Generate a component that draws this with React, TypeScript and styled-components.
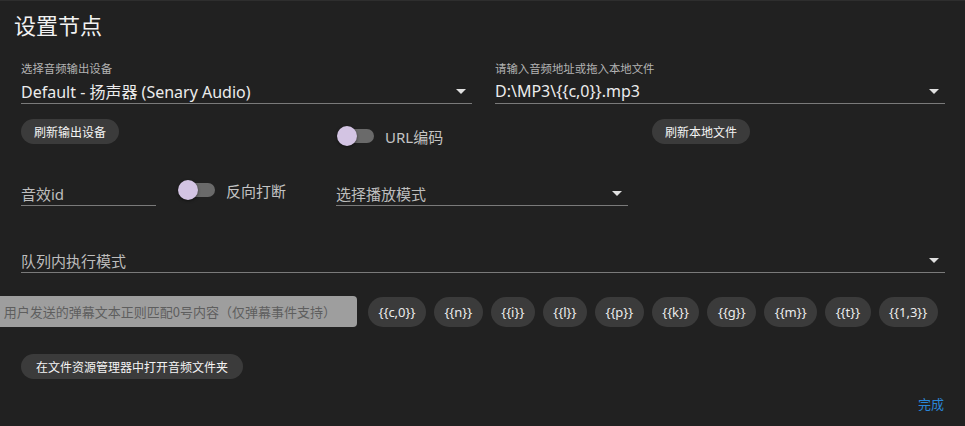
import React from "react";
import styled, { createGlobalStyle } from "styled-components";

const Global = createGlobalStyle`
  html, body { margin: 0; padding: 0; background: #212121; }
  body { font-family: "Noto Sans", "Noto Sans CJK SC", sans-serif; color: #e6e6e6; }
  * { box-sizing: border-box; }
`;

const Root = styled.div`
  width: 965px;
  height: 426px;
  overflow: hidden;
  background: #212121;
  border-top: 1px solid #2e2e2e;
`;

const Title = styled.h1`
  margin: 8px 0 0 14px;
  font-size: 22px;
  line-height: 30px;
  font-weight: 400;
  color: #f2f2f2;
  font-family: "Noto Sans CJK SC", sans-serif;
`;

const Body = styled.div`
  padding: 0 20px 0 21px;
  display: flex;
  flex-direction: column;
`;

const TwoCol = styled.div`
  display: grid;
  grid-template-columns: 451px 450px;
  column-gap: 23px;
  margin-top: 21px;
`;

const Field = styled.div`
  display: flex;
  flex-direction: column;
  border-bottom: 1px solid #7a7a7a;
`;

const Label = styled.div`
  font-size: 11.4px;
  line-height: 16px;
  color: #b3b3b3;
  font-family: "Noto Sans CJK SC", sans-serif;
`;

const ValueRow = styled.div<{ $top?: number; $muted?: boolean }>`
  display: flex;
  align-items: center;
  justify-content: space-between;
  margin-top: ${(p) => p.$top ?? 0}px;
  height: 24px;
  font-size: ${(p) => (p.$muted ? 15 : 16)}px;
  color: ${(p) => (p.$muted ? "#bdbdbd" : "#ececec")};
  white-space: nowrap;
`;

const Arrow = styled.span`
  width: 0;
  height: 0;
  border-left: 5px solid transparent;
  border-right: 5px solid transparent;
  border-top: 5px solid #e0e0e0;
  margin-right: 6px;
`;

const ActionRow = styled.div`
  display: grid;
  grid-template-columns: 316px 315px 1fr;
  align-items: start;
  margin-top: 15px;
`;

const Pill = styled.button`
  justify-self: start;
  height: 25px;
  padding: 0 13px;
  border: none;
  border-radius: 13px;
  background: #3b3b3b;
  color: #f4f4f4;
  font-family: "Noto Sans CJK SC", sans-serif;
  font-size: 12px;
  font-weight: 400;
  line-height: 25px;
  cursor: pointer;
`;

const WidePill = styled(Pill)`
  padding: 0 15px;
`;

const ToggleGroup = styled.div<{ $top?: number; $left?: number }>`
  display: flex;
  align-items: center;
  height: 24px;
  margin-top: ${(p) => p.$top ?? 0}px;
  margin-left: ${(p) => p.$left ?? 0}px;
`;

const Switch = styled.span`
  position: relative;
  display: inline-flex;
  align-items: center;
  width: 37px;
  height: 20px;
`;

const Track = styled.span`
  margin-left: 3px;
  width: 34px;
  height: 14px;
  border-radius: 7px;
  background: #6a6a6a;
`;

const Thumb = styled.span`
  position: absolute;
  left: 0;
  top: 0;
  width: 20px;
  height: 20px;
  border-radius: 50%;
  background: #d3c4e3;
  box-shadow: 0 1px 3px rgba(0, 0, 0, 0.5);
`;

const ToggleText = styled.span`
  margin-left: 11px;
  font-size: 15px;
  color: #c4c4c4;
  white-space: nowrap;
`;

const Row3 = styled.div`
  display: grid;
  grid-template-columns: 135px 180px 292px;
  align-items: start;
  margin-top: 33px;
`;

const FullRow = styled.div`
  margin-top: 42px;
`;

const ChipRow = styled.div`
  display: flex;
  align-items: center;
  gap: 8px;
  margin-top: 23px;
`;

const Tip = styled.div`
  flex: none;
  width: 357px;
  height: 31px;
  margin-left: -21px;
  margin-right: 3px;
  display: flex;
  align-items: center;
  justify-content: flex-end;
  padding-right: 21px;
  overflow: hidden;
  white-space: nowrap;
  background: #9e9e9e;
  border-radius: 0 4px 4px 0;
  color: #5e5e5e;
  font-size: 13px;
  font-family: "Noto Sans CJK SC", sans-serif;
`;

const Chip = styled.span`
  flex: none;
  height: 30px;
  padding: 0 10.5px;
  border-radius: 15px;
  background: #3b3b3b;
  color: #ececec;
  font-size: 13px;
  line-height: 30px;
  font-family: "Noto Sans", sans-serif;
`;

const OpenRow = styled.div`
  margin-top: 27px;
  display: flex;
`;

const Footer = styled.div`
  display: flex;
  justify-content: flex-end;
  margin-top: 15px;
`;

const Done = styled.button`
  border: none;
  background: transparent;
  padding: 0 1px 0 0;
  color: #2a86d8;
  font-size: 13px;
  line-height: 20px;
  font-family: "Noto Sans CJK SC", sans-serif;
  cursor: pointer;
`;

const Toggle = ({ label, top, left }: { label: string; top?: number; left?: number }) => (
  <ToggleGroup $top={top} $left={left}>
    <Switch>
      <Track />
      <Thumb />
    </Switch>
    <ToggleText>{label}</ToggleText>
  </ToggleGroup>
);

const chips = ["{{c,0}}", "{{n}}", "{{i}}", "{{l}}", "{{p}}", "{{k}}", "{{g}}", "{{m}}", "{{t}}", "{{1,3}}"];

export default function App() {
  return (
    <Root>
      <Global />
      <Title>设置节点</Title>
      <Body>
        <TwoCol>
          <Field>
            <Label>选择音频输出设备</Label>
            <ValueRow $top={3}>
              <span>Default - 扬声器 (Senary Audio)</span>
              <Arrow />
            </ValueRow>
          </Field>
          <Field>
            <Label>请输入音频地址或拖入本地文件</Label>
            <ValueRow $top={3}>
              <span>D:\MP3\{"{{c,0}}"}.mp3</span>
              <Arrow />
            </ValueRow>
          </Field>
        </TwoCol>

        <ActionRow>
          <Pill>刷新输出设备</Pill>
          <Toggle label="URL编码" top={5} />
          <Pill>刷新本地文件</Pill>
        </ActionRow>

        <Row3>
          <Field>
            <ValueRow $muted>
              <span>音效id</span>
            </ValueRow>
          </Field>
          <Toggle label="反向打断" top={-3} left={22} />
          <Field>
            <ValueRow $muted>
              <span>选择播放模式</span>
              <Arrow />
            </ValueRow>
          </Field>
        </Row3>

        <FullRow>
          <Field>
            <ValueRow $muted>
              <span>队列内执行模式</span>
              <Arrow />
            </ValueRow>
          </Field>
        </FullRow>

        <ChipRow>
          <Tip>用户发送的弹幕文本正则匹配0号内容（仅弹幕事件支持）</Tip>
          {chips.map((c) => (
            <Chip key={c}>{c}</Chip>
          ))}
        </ChipRow>

        <OpenRow>
          <WidePill>在文件资源管理器中打开音频文件夹</WidePill>
        </OpenRow>

        <Footer>
          <Done>完成</Done>
        </Footer>
      </Body>
    </Root>
  );
}
